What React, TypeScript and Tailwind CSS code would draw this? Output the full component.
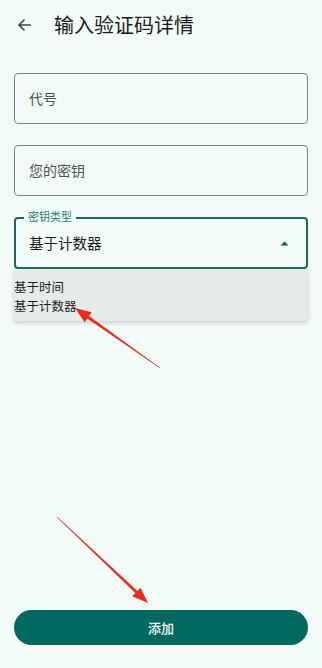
import React from "react";

export default function App() {
  const font = { fontFamily: '"Noto Sans CJK SC", "Noto Sans", sans-serif' };
  return (
    <div
      className="relative w-[322px] h-[668px] bg-[#f3fbf9] flex flex-col overflow-hidden"
      style={font}
    >
      {/* Header */}
      <div className="h-[50px] flex items-center pl-[17px] shrink-0">
        <svg width="15" height="14" viewBox="0 0 15 14" className="text-[#3f4947]">
          <path d="M14 7H2M7.5 1.5L2 7l5.5 5.5" fill="none" stroke="currentColor" strokeWidth="1.6" />
        </svg>
        <span className="ml-[22px] text-[20px] leading-none text-[#191c1b]">输入验证码详情</span>
      </div>

      {/* Fields */}
      <div className="mt-[23px] px-[14px] flex flex-col gap-[21px]">
        <div className="h-[51px] rounded-[4px] border border-[#7d8683] flex items-center pl-[14px] text-[14px] text-[#4a5452]">
          代号
        </div>
        <div className="h-[51px] rounded-[4px] border border-[#7d8683] flex items-center pl-[14px] text-[14px] text-[#4a5452]">
          您的密钥
        </div>
        <div className="relative">
          <div className="h-[52px] rounded-[4px] border-2 border-[#1c6a62] flex items-center pl-[13px] pr-[16px] text-[14.5px] text-[#191c1b]">
            <span className="flex-1">基于计数器</span>
            <svg width="9" height="5" viewBox="0 0 9 5" className="mr-[1px]">
              <path d="M0.5 4.5L4.5 0.5L8.5 4.5Z" fill="#1b5a53" />
            </svg>
          </div>
          <span className="absolute left-[10px] top-[-7px] px-[4px] bg-[#f3fbf9] text-[11px] leading-[13px] text-[#2a7b71]">
            密钥类型
          </span>
        </div>
      </div>

      {/* Dropdown menu */}
      <div className="mx-[14px] bg-[#e4ebe9] rounded-b-[4px] shadow-[0_2px_4px_rgba(0,0,0,0.18)] pt-[8px] pb-[6px] text-[12.5px] leading-[19px] text-[#1c1f1e]">
        <div>基于时间</div>
        <div>基于计数器</div>
      </div>

      <div className="flex-1" />

      {/* Button */}
      <div className="px-[14px] pb-[23px]">
        <button className="w-full h-[35px] rounded-full bg-[#006a60] text-white text-[13px] font-medium flex items-center justify-center">
          添加
        </button>
      </div>

      {/* Red annotation arrows */}
      <svg className="absolute inset-0 pointer-events-none" width="322" height="668" viewBox="0 0 322 668">
        <polygon
          points="160.17,367.75 88.94,316.0 91.53,312.33 75,308 84.61,322.13 87.2,318.46 159.83,368.25"
          fill="#ee2a1e"
        />
        <polygon
          points="56.79,517.22 135.34,593.10 132.25,596.37 148,603 140.49,587.65 137.40,590.92 57.21,516.78"
          fill="#ee2a1e"
        />
      </svg>
    </div>
  );
}
